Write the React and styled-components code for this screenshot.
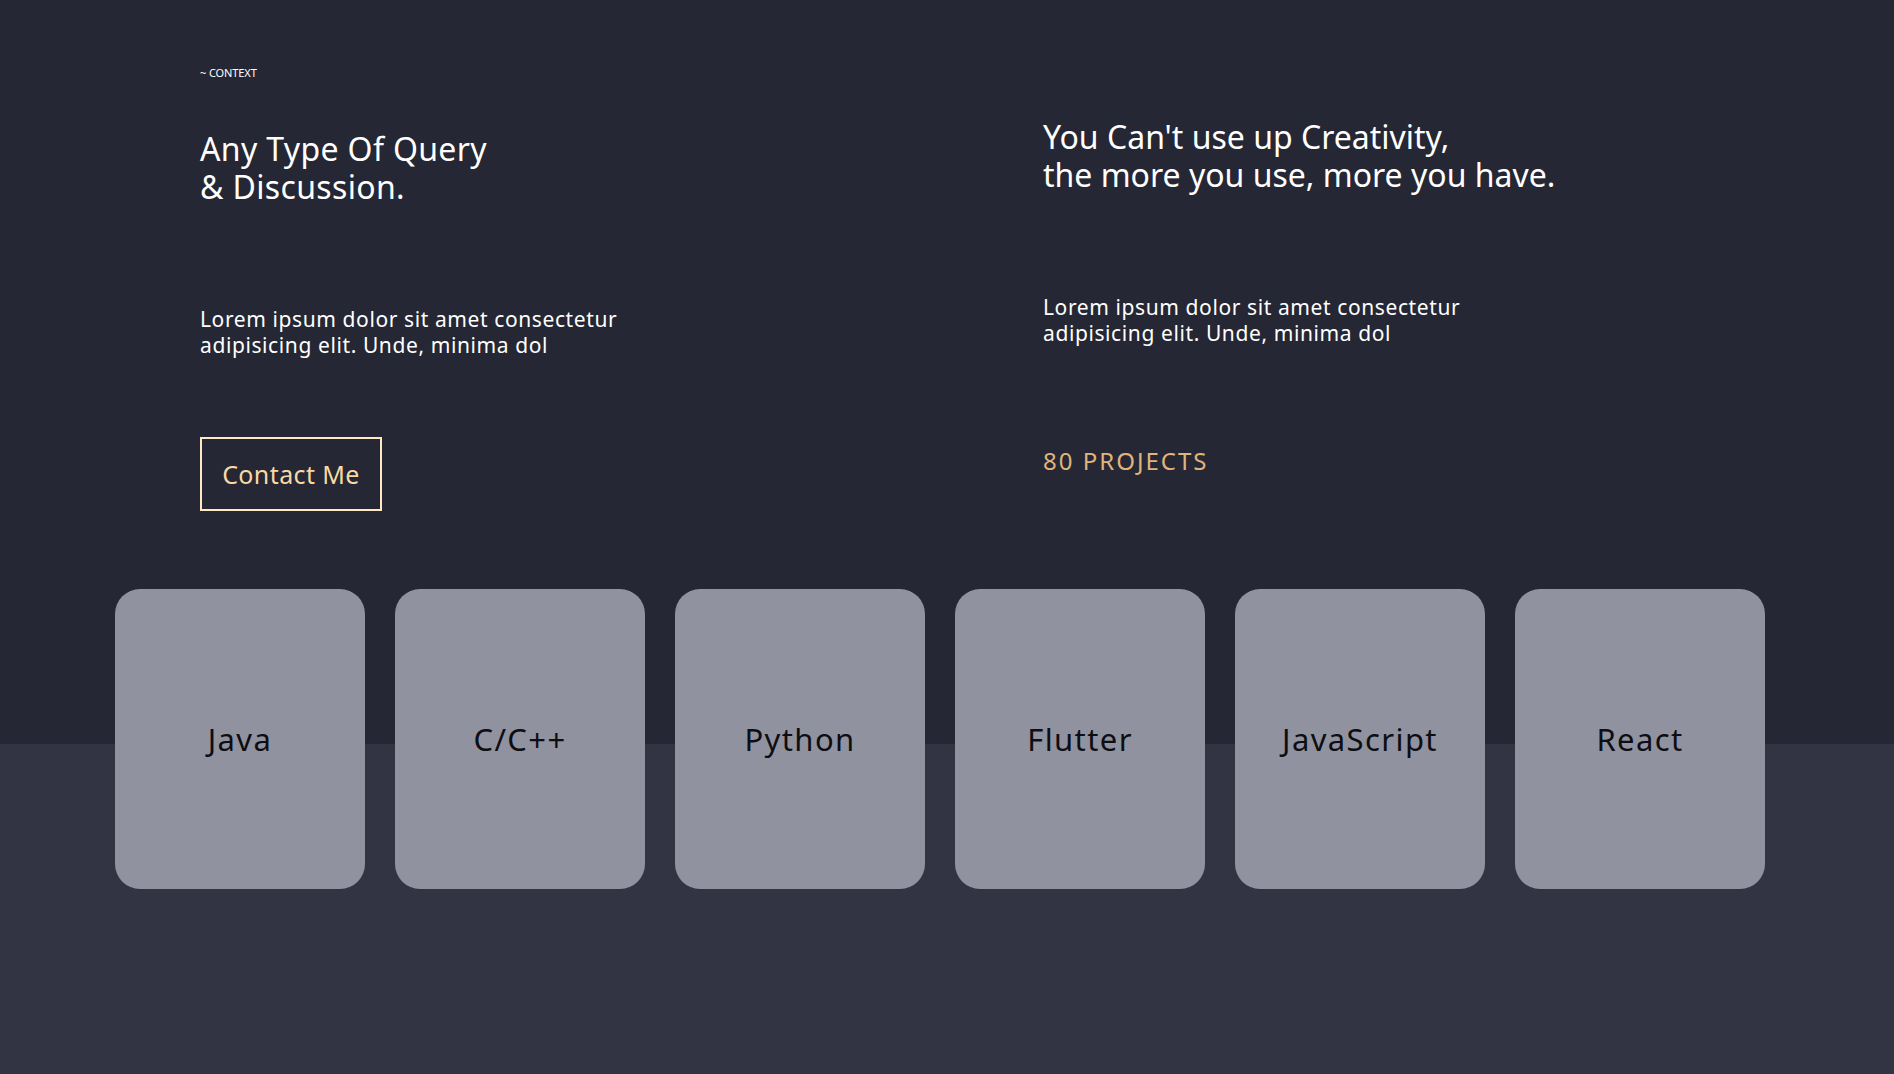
import React from "react";
import styled, { createGlobalStyle } from "styled-components";

const Global = createGlobalStyle`
  html, body { margin: 0; padding: 0; }
  body {
    background: linear-gradient(to bottom, #252734 0, #252734 744px, #323444 744px, #323444 100%);
    min-height: 1074px;
    font-family: "Noto Sans", "Open Sans", sans-serif;
    color: #ffffff;
  }
`;

const Page = styled.div`
  min-height: 1074px;
  display: flex;
  flex-direction: column;
`;

const Hero = styled.section`
  display: grid;
  grid-template-columns: 843px 1fr;
  padding: 66px 0 0 200px;
`;

const Column = styled.div`
  display: flex;
  flex-direction: column;
  align-items: flex-start;
`;

const Eyebrow = styled.div`
  font-size: 11px;
  line-height: 14px;
  letter-spacing: -0.1px;
`;

const Heading = styled.h1`
  margin: ${(p) => p.$top}px 0 0;
  font-size: 32px;
  line-height: 38px;
  font-weight: 400;
  letter-spacing: ${(p) => p.$ls}px;
`;

const Line = styled.span`
  display: block;
  height: 38px;
  white-space: nowrap;
`;

const Text = styled.p`
  margin: ${(p) => p.$top}px 0 0;
  font-size: 21px;
  line-height: 26px;
  font-weight: 400;
  letter-spacing: 0.6px;
`;

const ContactButton = styled.button`
  margin-top: ${(p) => p.$top}px;
  width: 182px;
  height: 74px;
  background: transparent;
  border: 2px solid #ffe8c2;
  color: #f7d9a6;
  font-family: inherit;
  font-size: 25px;
  letter-spacing: 0.4px;
  padding: 0;
  cursor: pointer;
`;

const Stat = styled.div`
  margin-top: ${(p) => p.$top}px;
  color: #e0b47c;
  font-size: 24px;
  line-height: 28px;
  letter-spacing: 2px;
`;

const Cards = styled.section`
  display: flex;
  gap: 30px;
  padding: 78px 0 0 115px;
`;

const Card = styled.div`
  width: 250px;
  height: 300px;
  border-radius: 25px;
  background: #9092a0;
  display: flex;
  align-items: center;
  justify-content: center;
  color: #0d0d12;
  font-size: 31px;
  letter-spacing: 1.4px;
`;

const skills = ["Java", "C/C++", "Python", "Flutter", "JavaScript", "React"];

export default function App() {
  return (
    <>
      <Global />
      <Page>
        <Hero>
          <Column>
            <Eyebrow>~ CONTEXT</Eyebrow>
            <Heading $top={50} $ls={0.35}>
              <Line>Any Type Of Query</Line>
              <Line>&amp; Discussion.</Line>
            </Heading>
            <Text $top={100}>
              Lorem ipsum dolor sit amet consectetur
              <br />
              adipisicing elit. Unde, minima dol
            </Text>
            <ContactButton $top={79}>Contact Me</ContactButton>
          </Column>
          <Column>
            <Heading $top={52} $ls={0}>
              <Line>You Can't use up Creativity,</Line>
              <Line>the more you use, more you have.</Line>
            </Heading>
            <Text $top={100}>
              Lorem ipsum dolor sit amet consectetur
              <br />
              adipisicing elit. Unde, minima dol
            </Text>
            <Stat $top={101}>80 PROJECTS</Stat>
          </Column>
        </Hero>
        <Cards>
          {skills.map((s) => (
            <Card key={s}>{s}</Card>
          ))}
        </Cards>
      </Page>
    </>
  );
}
